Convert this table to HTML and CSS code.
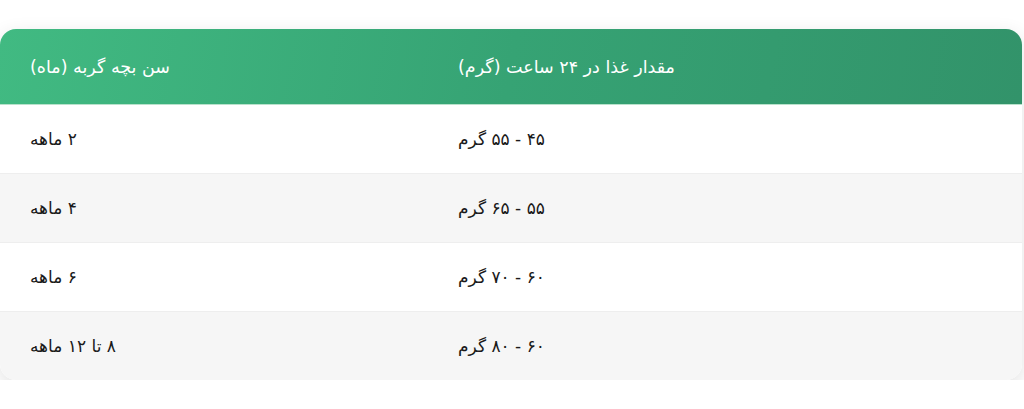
FILE: index.html
```html
<!DOCTYPE html>
<html lang="fa">
<head>
<meta charset="utf-8">
<link rel="stylesheet" href="styles.css">
</head>
<body>
<div class="wrap">
  <table class="feed" dir="rtl">
    <colgroup><col class="c1"><col class="c2"></colgroup>
    <thead>
      <tr><th>مقدار غذا در ۲۴ ساعت (گرم)</th><th>سن بچه گربه (ماه)</th></tr>
    </thead>
    <tbody>
      <tr><td>۴۵ - ۵۵ گرم</td><td>۲ ماهه</td></tr>
      <tr><td>۵۵ - ۶۵ گرم</td><td>۴ ماهه</td></tr>
      <tr><td>۶۰ - ۷۰ گرم</td><td>۶ ماهه</td></tr>
      <tr><td>۶۰ - ۸۰ گرم</td><td>۸ تا ۱۲ ماهه</td></tr>
    </tbody>
  </table>
</div>
</body>
</html>
```
FILE: styles.css
```css
html, body { margin: 0; padding: 0; background: #fff; }
body { font-family: "DejaVu Sans", sans-serif; }
.wrap { padding-top: 29px; width: 1022px; }
.feed {
  width: 1022px;
  border-collapse: separate;
  border-spacing: 0;
  border-radius: 16px;
  overflow: hidden;
  box-shadow: 0 6px 20px rgba(0,0,0,0.12);
  table-layout: fixed;
}
.c1 { width: 594px; }
.c2 { width: 428px; }
.feed thead tr { background: linear-gradient(100deg, #41ba82 0%, #36a374 50%, #32936a 100%); }
.feed th {
  height: 75px;
  padding: 0 30px;
  text-align: left;
  color: #fff;
  font-weight: 500;
  font-size: 17.5px;
  border-bottom: 1px solid #b9e2cc;
}
.feed td {
  height: 68px;
  padding: 0 30px;
  text-align: left;
  color: #1a1a1a;
  font-size: 17px;
  border-bottom: 1px solid #eeeeee;
}
.feed tbody tr:nth-child(even) td { background: #f6f6f6; }
.feed tbody tr:last-child td { border-bottom: none; height: 68px; }
```
